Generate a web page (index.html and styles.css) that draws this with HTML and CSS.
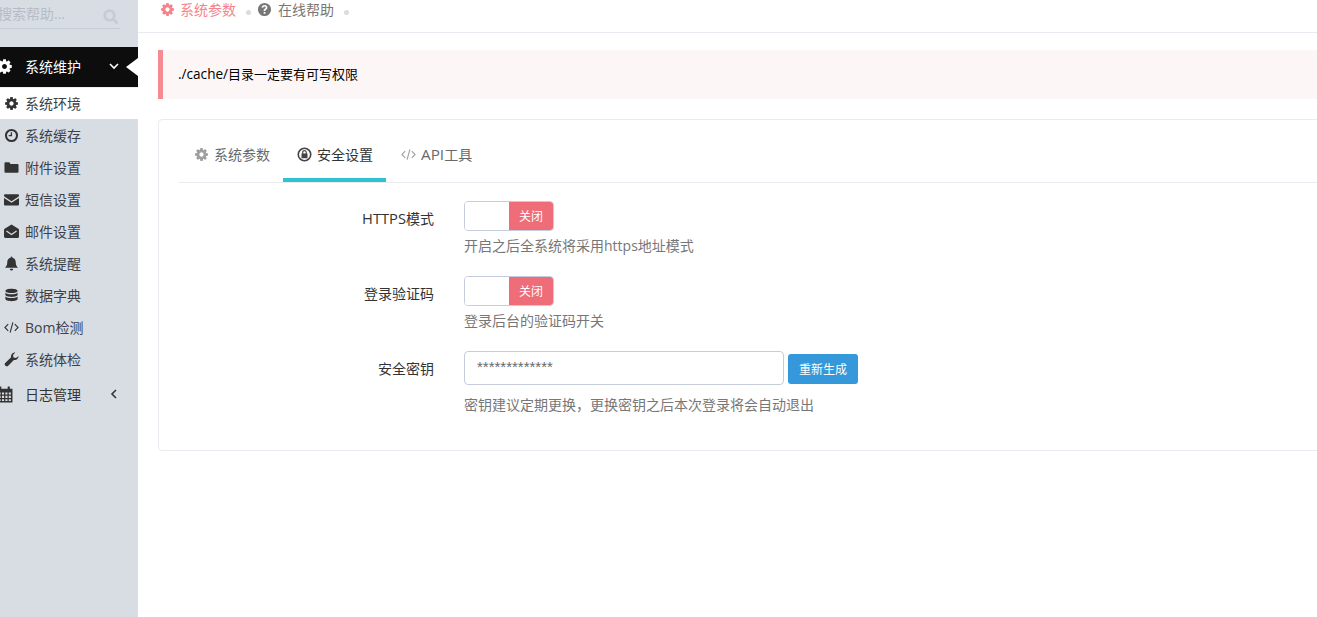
FILE: index.html
```html
<!DOCTYPE html>
<html lang="en">
<head>
  <meta charset="UTF-8">
  <meta name="viewport" content="width=device-width,initial-scale=1.0">
  <title>系统参数</title>
  <link rel="stylesheet" href="styles.css">
</head>
<body>
  <svg class="defs" aria-hidden="true">
    <symbol id="i-cog" viewBox="0 0 1792 1792"><path d="M1152 896q0-106-75-181t-181-75-181 75-75 181 75 181 181 75 181-75 75-181zm512-109v222q0 12-8 23t-20 13l-185 28q-19 54-39 91 35 50 107 138 10 12 10 25t-9 23q-27 37-99 108t-94 71q-12 0-26-9l-138-108q-44 23-91 38-16 136-29 186-7 28-36 28h-222q-14 0-24.500-8.500t-11.500-21.500l-28-184q-49-16-90-37l-141 107q-10 9-25 9-14 0-25-11-126-114-165-168-7-10-7-23 0-12 8-23 15-21 51-66.500t54-70.500q-27-50-41-99l-183-27q-13-2-21-12.500t-8-23.500v-222q0-12 8-23t19-13l186-28q14-46 39-92-40-57-107-138-10-12-10-24 0-10 9-23 26-36 98.500-107.500t94.500-71.500q13 0 26 10l138 107q44-23 91-38 16-136 29-186 7-28 36-28h222q14 0 24.500 8.500t11.500 21.500l28 184q49 16 90 37l142-107q9-9 24-9 13 0 25 10 129 119 165 170 7 8 7 22 0 12-8 23-15 21-51 66.500t-54 70.500q26 50 41 98l183 28q13 2 21 12.500t8 23.500z"/></symbol>
    <symbol id="i-clock" viewBox="0 0 16 16"><path fill-rule="evenodd" d="M8 1a7 7 0 1 1 0 14A7 7 0 0 1 8 1zm0 2.200a4.800 4.800 0 1 0 0 9.600 4.800 4.800 0 0 0 0-9.600zM7.200 4.500h1.400v4.300H5V7.500h2.200z"/></symbol>
    <symbol id="i-folder" viewBox="0 0 16 16"><path d="M1.500 2.500h4.200l1.300 1.700h7.500c.6 0 1 .4 1 1v7.300c0 .6-.4 1-1 1h-13c-.6 0-1-.4-1-1v-9c0-.6.400-1 1-1z"/></symbol>
    <symbol id="i-mail" viewBox="0 0 16 16"><path d="M1.300 2.500h13.400c.7 0 1.300.6 1.300 1.300 0 .5-.3 1-.7 1.300L8 9.800.7 5.100C.3 4.800 0 4.300 0 3.800c0-.7.600-1.300 1.300-1.300zM0 6.500l8 5 8-5v6.800c0 .7-.6 1.200-1.300 1.200H1.300C.6 14.500 0 14 0 13.300z"/></symbol>
    <symbol id="i-mail-open" viewBox="0 0 16 16"><path fill-rule="evenodd" d="M8 .5l7.300 4.600c.4.300.7.700.7 1.200v7.400c0 .7-.6 1.300-1.300 1.300H1.300C.6 14.500 0 13.900 0 13.200V6.300c0-.5.300-.9.700-1.200zM3 7l-.8 1.100L8 12l5.800-3.900L13 7l-5 3.300z"/></symbol>
    <symbol id="i-bell" viewBox="0 0 16 16"><path d="M8 .5c.5 0 .9.400.9.900v.5c2.200.4 3.600 2.200 3.600 4.600 0 3.300 1 4.700 2.500 6H1c1.500-1.300 2.500-2.700 2.500-6 0-2.400 1.400-4.200 3.600-4.600v-.5c0-.5.400-.9.900-.9zM6.200 13.500h3.600c0 1-.8 2-1.800 2s-1.800-1-1.800-2z"/></symbol>
    <symbol id="i-db" viewBox="0 0 16 16"><path d="M8 .8c3.600 0 6.500 1 6.500 2.300S11.600 5.400 8 5.400 1.500 4.400 1.500 3.100 4.400.8 8 .8zM1.500 5c1.200 1 3.800 1.700 6.500 1.700S13.300 6 14.500 5v2.200C14.500 8.500 11.600 9.500 8 9.500S1.500 8.500 1.500 7.200zm0 4c1.200 1 3.800 1.700 6.500 1.700s5.300-.7 6.500-1.700v2.700c0 1.300-2.900 2.300-6.500 2.300s-6.500-1-6.500-2.300z"/></symbol>
    <symbol id="i-code" viewBox="0 0 16 16"><path fill="none" stroke="currentColor" stroke-width="1.200" d="M4.500 4.500L1 8l3.500 3.500M11.500 4.500L15 8l-3.500 3.500M9.500 2.500l-3 11"/></symbol>
    <symbol id="i-wrench" viewBox="0 0 16 16"><path d="M15.500 4.200c.2 2.700-2.300 5-5 4.200l-6 6.300c-.8.800-2.100.8-2.900 0l-.3-.3c-.8-.8-.8-2 0-2.800l6.300-6C6.900 2.800 9.400.3 12 .6l-2.400 2.500.5 2.800 2.800.6z"/></symbol>
    <symbol id="i-calendar" viewBox="0 0 16 16"><path fill-rule="evenodd" d="M3 .5h2v2h6v-2h2v2h2.500v13H.5v-13H3zM2 6v2h2.400V6zm3.600 0v2h2V6zm3.200 0v2h2V6zm3.200 0v2H14V6zM2 9.200v2h2.400v-2zm3.600 0v2h2v-2zm3.200 0v2h2v-2zm3.200 0v2H14v-2zM2 12.400V14h2.400v-1.600zm3.600 0V14h2v-1.600zm3.200 0V14h2v-1.600zm3.200 0V14h2v-1.600z"/></symbol>
    <symbol id="i-help" viewBox="0 0 16 16"><path fill-rule="evenodd" d="M8 1a7 7 0 1 1 0 14A7 7 0 0 1 8 1zm-.9 9.700v1.900h1.900v-1.900zM8 3.300c-1.800 0-3 1-3.100 2.600l1.800.3c.1-.8.500-1.300 1.300-1.300.7 0 1.200.4 1.200 1 0 .5-.3.800-.9 1.200-.9.600-1.200 1.100-1.200 2.100v.3h1.800c0-.6.200-.9.800-1.300.9-.6 1.400-1.200 1.400-2.300 0-1.600-1.200-2.600-3.100-2.600z"/></symbol>
    <symbol id="i-lock" viewBox="0 0 16 16"><path fill-rule="evenodd" d="M8 .5a7.500 7.500 0 1 1 0 15A7.500 7.500 0 0 1 8 .5zm0 1.700a5.800 5.800 0 1 0 0 11.600A5.800 5.800 0 0 0 8 2.200zm0 1.100c1.500 0 2.500 1 2.500 2.500V7h.7v5H4.800V7h.7V5.300C5.500 4.300 6.500 3.300 8 3.300zm0 1.200c-.8 0-1.300.5-1.300 1.300V7h2.600V5.800c0-.8-.5-1.300-1.300-1.300z"/></symbol>
  </svg>

  <div class="layout">
    <!-- sidebar, scrolled a little past its left edge -->
    <aside class="sidebar">
      <div class="search">
        <span class="search-text">搜索帮助...</span>
        <svg class="search-icon" viewBox="0 0 16 16"><circle cx="6.500" cy="6.500" r="4.800"/><path d="M10 10l4.500 4.500"/></svg>
      </div>
      <div class="menu-head active">
        <svg class="ico"><use href="#i-cog"/></svg>
        <span class="menu-name">系统维护</span>
        <svg class="chev" viewBox="0 0 10 10"><path d="M1 3l4 4 4-4"/></svg>
      </div>
      <ul class="submenu">
        <li class="current"><svg class="ico"><use href="#i-cog"/></svg>系统环境</li>
        <li><svg class="ico"><use href="#i-clock"/></svg>系统缓存</li>
        <li><svg class="ico"><use href="#i-folder"/></svg>附件设置</li>
        <li><svg class="ico"><use href="#i-mail"/></svg>短信设置</li>
        <li><svg class="ico"><use href="#i-mail-open"/></svg>邮件设置</li>
        <li><svg class="ico"><use href="#i-bell"/></svg>系统提醒</li>
        <li><svg class="ico"><use href="#i-db"/></svg>数据字典</li>
        <li><svg class="ico"><use href="#i-code"/></svg>Bom检测</li>
        <li><svg class="ico"><use href="#i-wrench"/></svg>系统体检</li>
      </ul>
      <div class="menu-head">
        <svg class="ico"><use href="#i-calendar"/></svg>
        <span class="menu-name">日志管理</span>
        <svg class="chev" viewBox="0 0 10 10"><path d="M7 1L3 5l4 4"/></svg>
      </div>
    </aside>

    <main class="main">
      <div class="crumbs">
        <span class="crumb on"><svg class="ico"><use href="#i-cog"/></svg>系统参数</span>
        <i class="dot"></i>
        <span class="crumb"><svg class="ico"><use href="#i-help"/></svg>在线帮助</span>
        <i class="dot"></i>
      </div>

      <div class="content">
        <div class="alert"><span class="alert-path">./cache/</span>目录一定要有可写权限</div>

        <div class="card">
          <div class="tabs">
            <div class="tab"><svg class="ico"><use href="#i-cog"/></svg>系统参数</div>
            <div class="tab on"><svg class="ico"><use href="#i-lock"/></svg>安全设置</div>
            <div class="tab"><svg class="ico"><use href="#i-code"/></svg><span><span class="api-name">API</span>工具</span></div>
          </div>

          <div class="form-row">
            <label class="form-label"><span class="latin">HTTPS</span>模式</label>
            <div class="form-field">
              <div class="switch"><span class="switch-off"></span><span class="switch-on">关闭</span></div>
              <p class="help">开启之后全系统将采用https地址模式</p>
            </div>
          </div>

          <div class="form-row">
            <label class="form-label">登录验证码</label>
            <div class="form-field">
              <div class="switch"><span class="switch-off"></span><span class="switch-on">关闭</span></div>
              <p class="help">登录后台的验证码开关</p>
            </div>
          </div>

          <div class="form-row key-row">
            <label class="form-label">安全密钥</label>
            <div class="form-field">
              <div class="key-line">
                <input class="key-input" type="text" value="*************">
                <button class="btn" type="button">重新生成</button>
              </div>
              <p class="help">密钥建议定期更换，更换密钥之后本次登录将会自动退出</p>
            </div>
          </div>
        </div>
      </div>
    </main>
  </div>
</body>
</html>
```

FILE: styles.css
```css
* { margin:0; padding:0; box-sizing:border-box; }
html, body { height:100%; overflow:hidden; }
body {
  background:#fff;
  color:#333;
  font-family:"Open Sans","Noto Sans CJK SC",sans-serif;
  font-size:14px;
}
.defs { display:none; }
.ico { width:14px; height:14px; fill:currentColor; flex:none; }
.latin { font-size:14.7px; }

.layout { display:flex; height:100%; }

/* sidebar */
.sidebar {
  width:138px; flex:none;
  background:#d8dde4;
  overflow:hidden;
}
.search {
  display:flex; align-items:center; justify-content:space-between;
  width:130px; height:29px;
  margin-left:-10px; padding:0 1px 0 8px;
  border-bottom:1px solid #c5ccd5;
  color:#b5bcc6;
  line-height:30px;
}
.search-icon {
  width:16px; height:16px; margin-top:6px;
  fill:none; stroke:#c5ccd5; stroke-width:2.800;
}
.menu-head {
  display:flex; align-items:center;
  height:40px;
  margin-top:18px;
  padding-bottom:2px;
  color:#333;
  position:relative;
}
.menu-head .ico { margin-left:-4px; width:17px; height:17px; }
.menu-name { margin-left:12px; width:84px; }
.chev { width:10px; height:10px; fill:none; stroke:currentColor; stroke-width:1.600; }
.menu-head.active { background:#0d0d0d; color:#fff; }
/* white notch pointing at the content */
.menu-head.active::after {
  content:''; position:absolute; right:0; top:11px;
  border-right:12px solid #fff;
  border-top:9px solid transparent;
  border-bottom:9px solid transparent;
}
.menu-head:not(.active) { margin-top:1px; height:38px; }
.submenu { list-style:none; }
.submenu li {
  display:flex; align-items:center; gap:6px;
  height:32px;
  padding-left:4px;
  color:#3c4249;
}
.submenu .current { background:#fff; box-shadow:inset 0 1px 0 #eef0f3; }
.submenu .ico { width:15px; height:15px; color:#333; }

/* main column */
.main { flex:1; min-width:0; }
.crumbs {
  display:flex; align-items:center;
  height:33px;
  padding:0 0 14px 22px;
  border-bottom:1px solid #e7eaf0;
  color:#777;
}
.crumb { display:flex; align-items:center; gap:6px; }
.crumb .ico { width:15px; height:15px; }
.crumb.on { color:#f4838c; gap:5px; }
.dot {
  width:5px; height:5px; border-radius:50%;
  background:#dcdcdc;
  margin:7px 6px 0 10px;
}
.content { padding:17px 0 0 20px; margin-right:-40px; }
.alert {
  height:49px; line-height:48px;
  padding-left:15px;
  background:#fdf6f6;
  border-left:5px solid #f58a92;
  color:#000;
  font-size:13px;
}
.alert-path { font-size:13.6px; }
.card {
  margin-top:20px;
  height:332px;
  padding:0 20px;
  border:1px solid #e8ebf0;
  border-radius:4px;
}
.tabs {
  display:flex;
  height:63px;
  border-bottom:1px solid #e8ebf0;
}
.tab {
  display:flex; align-items:center; gap:5px;
  height:62px;
  padding:10px 13px 0 15px;
  color:#676a6c;
  border-bottom:4px solid transparent;
}
.tab .ico { width:15px; height:15px; color:#a0a0a0; }
.tab.on { color:#333; border-bottom-color:#2fc3d0; padding:10px 13px 0 14px; }
.tab.on .ico { color:#444; }
.api-name { font-size:15.3px; }

.form-row { display:flex; margin-top:18px; }
.form-row + .form-row { margin-top:20px; }
.form-label {
  width:255px; flex:none;
  padding-top:7px;
  text-align:right;
  color:#333;
}
.form-field { margin-left:30px; }
.switch {
  display:flex;
  width:90px; height:30px;
  border:1px solid #c5ccdc;
  border-radius:4px;
  overflow:hidden;
}
.switch-off { flex:1; background:#fff; }
.switch-on {
  width:44px;
  background:#ef6c79;
  color:#fff;
  font-size:12px;
  line-height:30px;
  text-align:center;
}
.help { color:#777; line-height:20px; margin-top:5px; }
.key-line { display:flex; align-items:center; gap:4px; height:34px; }
.key-input {
  width:320px; height:34px;
  padding:0 12px 4px;
  border:1px solid #c5ccdc;
  border-radius:4px;
  color:#676a6c;
  font:15px "Liberation Sans",sans-serif;
  outline:none;
}
.btn {
  width:70px; height:30px;
  margin-top:2px;
  background:#3498db;
  border:0; border-radius:3px;
  color:#fff;
  font:12px "Open Sans","Noto Sans CJK SC",sans-serif;
}
.key-row .help { margin-top:10px; }
```
